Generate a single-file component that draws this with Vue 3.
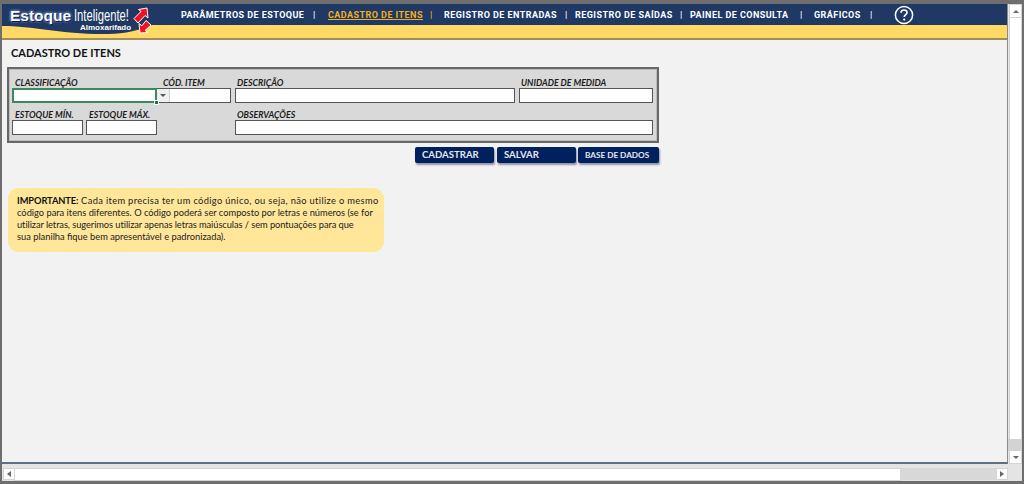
<script setup>
const navItems = [
  { label: 'PARÂMETROS DE ESTOQUE', box: 132, step: 147 },
  { label: 'CADASTRO DE ITENS', box: 102, step: 116, active: true },
  { label: 'REGISTRO DE ENTRADAS', box: 121, step: 131 },
  { label: 'REGISTRO DE SAÍDAS', box: 105, step: 115 },
  { label: 'PAINEL DE CONSULTA', box: 110, step: 124 },
  { label: 'GRÁFICOS', box: 56, step: 59 }
]
</script>

<template>
  <div class="window">
    <div class="main-row">
      <div class="sheet">
        <header class="header">
          <div class="navbar">
            <div class="logo">
              <span class="logo-estoque">Estoque</span>
              <span class="logo-inteligente">Inteligente!</span>
              <span class="logo-sub">Almoxarifado</span>
              <svg class="logo-arrows" viewBox="0 0 20 30" width="20" height="30">
                <path d="M14 2 L15 12 L12 9.5 L5 17 L1 12.5 L8 5.5 L5.5 3.5 Z" fill="#f01020" stroke="#fff" stroke-width="1"/>
                <path d="M7 27 L6 17.5 L9 19.8 L13 14.5 L18 19 L12 24.5 L15 26.5 Z" fill="#f01020" stroke="#fff" stroke-width="1"/>
              </svg>
            </div>
            <nav class="nav">
              <div
                v-for="item in navItems"
                :key="item.label"
                class="nav-item"
                :class="{ active: item.active }"
                :style="{ width: item.step + 'px' }"
              >
                <span class="nav-label" :style="{ width: item.box + 'px' }"><span class="nav-text">{{ item.label }}</span></span>
                <span class="nav-sep">|</span>
              </div>
            </nav>
            <svg class="help" viewBox="0 0 20 20" width="20" height="20">
              <circle cx="10" cy="10" r="8.6" fill="none" stroke="#fff" stroke-width="1.5"/>
              <path d="M7 7.8 C7 5.8 8.5 5 10 5 C11.8 5 13 6 13 7.5 C13 9.6 10.2 9.6 10.2 12" fill="none" stroke="#fff" stroke-width="1.7"/>
              <circle cx="10.2" cy="14.6" r="1.1" fill="#fff"/>
            </svg>
          </div>
          <div class="band">
            <svg class="band-curve" viewBox="0 0 150 13" width="150" height="13" preserveAspectRatio="none">
              <path d="M0 0 H150 C130 8 118 9 100 9 C60 9 30 1 0 1 Z" fill="#1f3864"/>
            </svg>
          </div>
        </header>

        <main class="page">
          <h1 class="title">CADASTRO DE ITENS</h1>

          <section class="panel">
            <div class="form-grid">
              <label class="lbl c-class">CLASSIFICAÇÃO</label>
              <label class="lbl c-cod">CÓD. ITEM</label>
              <label class="lbl c-desc">DESCRIÇÃO</label>
              <label class="lbl c-unit">UNIDADE DE MEDIDA</label>

              <div class="input selected c-class"><span class="handle"></span></div>
              <div class="input c-cod cod-input"><span class="dropdown"><i></i></span></div>
              <div class="input c-desc"></div>
              <div class="input c-unit"></div>

              <label class="lbl c-min">ESTOQUE MÍN.</label>
              <label class="lbl c-max">ESTOQUE MÁX.</label>
              <label class="lbl c-obs">OBSERVAÇÕES</label>

              <div class="input c-min"></div>
              <div class="input c-max"></div>
              <div class="input c-obs"></div>
            </div>
          </section>

          <div class="actions">
            <button class="btn">CADASTRAR</button>
            <button class="btn">SALVAR</button>
            <button class="btn b3">BASE DE DADOS</button>
          </div>

          <aside class="note">
            <div class="line-wide"><strong>IMPORTANTE:</strong> Cada item precisa ter um código único, ou seja, não utilize o mesmo</div>
            <div>código para itens diferentes. O código poderá ser composto por letras e números (se for</div>
            <div class="line-tight">utilizar letras, sugerimos utilizar apenas letras maiúsculas / sem pontuações para que</div>
            <div>sua planilha fique bem apresentável e padronizada).</div>
          </aside>
        </main>
      </div>

      <div class="vscroll">
        <span class="sbtn"><i class="arrow up"></i></span>
        <span class="vthumb"></span>
        <span class="vtrack"></span>
        <span class="sbtn"><i class="arrow down"></i></span>
      </div>
    </div>

    <div class="hscroll">
      <span class="hbtn"><i class="arrow left"></i></span>
      <span class="hthumb"></span>
      <span class="htrack"></span>
      <span class="hbtn"><i class="arrow right"></i></span>
    </div>
  </div>
</template>

<style scoped>
.window {
  width: 1024px;
  height: 484px;
  box-sizing: border-box;
  border: 2px solid #6e6e6e;
  border-top-width: 4px;
  border-bottom-width: 3px;
  background: #e6e6e6;
  display: flex;
  flex-direction: column;
  overflow: hidden;
  font-family: Lato, "Open Sans", sans-serif;
  color: #111;
}
.main-row {
  flex: 1;
  display: flex;
  min-height: 0;
}
.sheet {
  width: 1006px;
  flex: none;
  display: flex;
  flex-direction: column;
  border-bottom: 2px solid #5f6f82;
  border-right: 1px solid #8b8b8b;
  box-sizing: border-box;
}
.header {
  position: relative;
}
.navbar {
  height: 21px;
  background: #1f3864;
  display: flex;
  align-items: center;
}
.logo {
  width: 179px;
  height: 21px;
  position: relative;
  flex: none;
}
.logo-estoque {
  position: absolute;
  left: 8px;
  top: 4px;
  font: 700 15.5px/16px "Liberation Sans", sans-serif;
  color: #fff;
  text-shadow: 0 0 1px #0b1f52, 1px 1px 0 #0b1f52, 0 0 3px #8ea2d6, 0 0 3px #8ea2d6;
}
.logo-inteligente {
  position: absolute;
  left: 72px;
  top: 5px;
  font: 400 17px/13px "Liberation Sans", sans-serif;
  color: #fff;
  transform: scaleX(0.66);
  transform-origin: left center;
  white-space: nowrap;
}
.logo-sub {
  position: absolute;
  left: 78px;
  top: 20px;
  z-index: 2;
  font: 700 8px/8px "Liberation Sans", sans-serif;
  color: #fff;
}
.logo-arrows {
  position: absolute;
  left: 131px;
  top: 2px;
  z-index: 2;
}
.nav {
  display: flex;
  align-items: center;
}
.nav-item {
  display: flex;
  flex: none;
  align-items: center;
  font: 700 9px/12px Roboto, sans-serif;
  letter-spacing: 0.45px;
  color: #fff;
  white-space: nowrap;
}
.nav-label {
  flex: none;
}
.nav-item.active {
  color: #f2b01e;
}
.nav-item.active .nav-text {
  text-decoration: underline;
}
.help {
  margin-left: 21px;
  flex: none;
}
.band {
  height: 13px;
  background: #ffd966;
  border-bottom: 2px solid #a08d5c;
  position: relative;
}
.band-curve {
  position: absolute;
  left: 0;
  top: 0;
  display: block;
}
.page {
  flex: 1;
  background: #f2f2f2;
  padding: 5px 0 0 5px;
  min-height: 0;
}
.title {
  margin: 0 0 6px 4px;
  font: 700 11px/16px Lato, sans-serif;
  color: #111;
}
.panel {
  width: 652px;
  height: 76px;
  box-sizing: border-box;
  background: #d9d9d9;
  border: 2px solid #686868;
  padding: 8px 3px 0;
  box-shadow: inset 0 0 0 1px #bdbdbd;
}
.form-grid {
  display: grid;
  grid-template-columns: 71px 71px 72px 281px 134px;
  column-gap: 3px;
  grid-template-rows: 11px 16px 16px 16px;
}
.lbl {
  font: italic 700 8.8px/11px Lato, sans-serif;
  color: #1b1b1b;
  padding-left: 2px;
  white-space: nowrap;
  align-self: end;
}
.lbl.c-class, .lbl.c-cod, .lbl.c-min, .lbl.c-max {
  padding-left: 3px;
}
.input {
  background: #fff;
  border: 1px solid #555;
  box-sizing: border-box;
  height: 15px;
  position: relative;
}
.c-class { grid-column: 1 / span 2; width: 145px; }
.c-cod { grid-column: 3; }
.c-desc { grid-column: 4; width: 280px; }
.c-unit { grid-column: 5; }
.c-min { grid-column: 1; }
.c-max { grid-column: 2; }
.c-obs { grid-column: 4 / span 2; width: 418px; }
.lbl.c-class, .lbl.c-cod, .lbl.c-desc, .lbl.c-unit { grid-row: 1; }
.input.c-class, .input.c-cod, .input.c-desc, .input.c-unit { grid-row: 2; }
.lbl.c-min, .lbl.c-max, .lbl.c-obs { grid-row: 3; }
.input.c-min, .input.c-max, .input.c-obs { grid-row: 4; }
.cod-input {
  margin-left: -3px;
  width: 74px;
  border-left: none;
}
.input.selected {
  border: 2px solid #3a8a5f;
  z-index: 2;
}
.handle {
  position: absolute;
  right: -4px;
  bottom: -4px;
  width: 3px;
  height: 3px;
  background: #217346;
  border: 1px solid #fff;
}
.dropdown {
  position: absolute;
  left: 0;
  top: 0;
  width: 12px;
  height: 13px;
  background: #eef0f2;
  border-right: 1px solid #cfd3d8;
  display: flex;
  align-items: center;
  justify-content: center;
}
.dropdown i {
  width: 0;
  height: 0;
  border-left: 3px solid transparent;
  border-right: 3px solid transparent;
  border-top: 3px solid #555;
}
.actions {
  display: flex;
  width: 652px;
  justify-content: flex-end;
  gap: 3px;
  margin-top: 4px;
}
.btn {
  height: 16px;
  width: 79px;
  padding: 0 0 0 7px;
  border: none;
  border-radius: 2px;
  background: #002060;
  color: #e8e8e8;
  text-align: left;
  font: 700 9.6px/16px Lato, sans-serif;
  box-shadow: 1px 2px 2px rgba(60, 70, 90, 0.55);
  white-space: nowrap;
}
.btn:nth-child(2) { margin-right: -1px; }
.b3 {
  width: 81px;
  font-size: 8.2px;
}
.note {
  margin-top: 25px;
  margin-left: 1px;
  width: 376px;
  height: 64px;
  box-sizing: border-box;
  background: #ffe699;
  border-radius: 11px;
  padding: 7px 0 0 9px;
  font: 400 9.3px/12px Lato, sans-serif;
  color: #222;
  white-space: nowrap;
}
.note strong {
  font-weight: 700;
  color: #111;
  letter-spacing: -0.1px;
}
.line-wide {
  letter-spacing: 0.35px;
}
.line-tight {
  letter-spacing: -0.07px;
}
.vscroll {
  width: 14px;
  flex: none;
  display: flex;
  flex-direction: column;
  background: #e6e6e6;
  padding: 1px 0 1px 2px;
  box-sizing: border-box;
}
.sbtn {
  flex: none;
  width: 11px;
  height: 12px;
  background: #fdfdfd;
  display: flex;
  align-items: center;
  justify-content: center;
  box-shadow: 0 0 0 1px #d4d4d4;
}
.vthumb {
  flex: 1;
  width: 11px;
  margin-top: 1px;
  background: #fff;
  box-shadow: 0 0 0 1px #d4d4d4;
}
.vtrack {
  flex: none;
  height: 12px;
  margin-left: -2px;
  width: 14px;
  background: #d3d3d3;
}
.hscroll {
  height: 17px;
  flex: none;
  display: flex;
  align-items: center;
  background: #e4e4e4;
  padding: 3px 15px 0 2px;
  box-sizing: border-box;
}
.hbtn {
  flex: none;
  width: 10px;
  height: 10px;
  background: #fdfdfd;
  display: flex;
  align-items: center;
  justify-content: center;
  box-shadow: 0 0 0 1px #d4d4d4;
}
.hthumb {
  flex: none;
  width: 885px;
  height: 11px;
  background: #fff;
  margin-left: 1px;
  box-shadow: 0 0 0 1px #d4d4d4;
}
.htrack {
  flex: 1;
  height: 12px;
  background: #d8d8d8;
}
.arrow {
  width: 0;
  height: 0;
  display: block;
}
.arrow.up {
  border-left: 3px solid transparent;
  border-right: 3px solid transparent;
  border-bottom: 3px solid #666;
}
.arrow.down {
  border-left: 3px solid transparent;
  border-right: 3px solid transparent;
  border-top: 3px solid #666;
}
.arrow.left {
  border-top: 3px solid transparent;
  border-bottom: 3px solid transparent;
  border-right: 4px solid #666;
}
.arrow.right {
  border-top: 3px solid transparent;
  border-bottom: 3px solid transparent;
  border-left: 4px solid #666;
}
</style>

<style>
html, body { margin: 0; padding: 0; background: #fff; }
</style>
